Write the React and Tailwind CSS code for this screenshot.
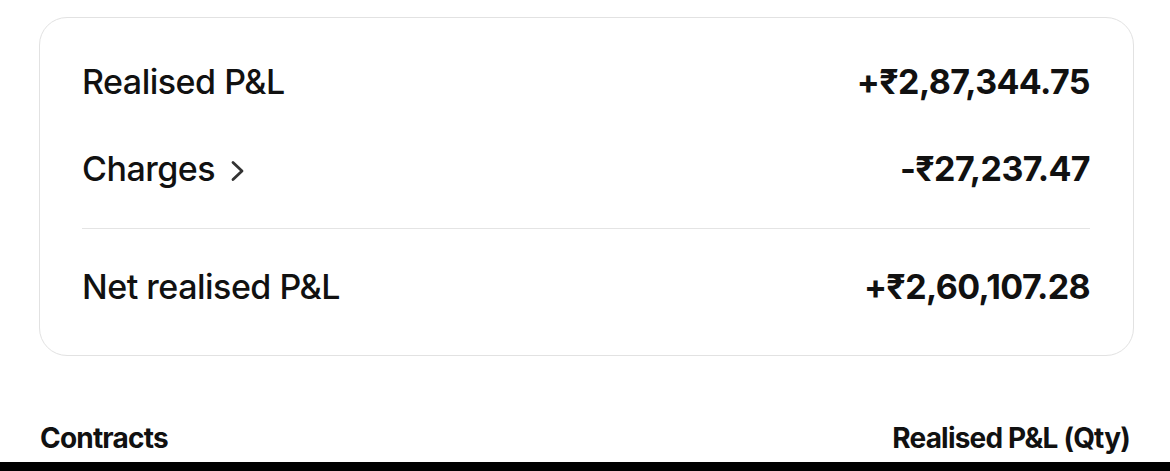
import React from 'react';

const rows = [
  { label: 'Realised P&L', value: '+₹2,87,344.75' },
  { label: 'Charges', value: '-₹27,237.47', link: true },
];

function Chevron() {
  return (
    <svg width="16" height="24" viewBox="0 0 16 24" fill="none" className="ml-[14px] mt-[4px]">
      <path d="M4 3.5l9 8.5-9 8.5" stroke="#333" strokeWidth="2.8" strokeLinecap="round" strokeLinejoin="round" />
    </svg>
  );
}

export default function App() {
  return (
    <div className="w-[1170px] h-[471px] bg-white overflow-hidden flex flex-col text-[#111]" style={{ fontFamily: 'Inter, "Noto Sans", sans-serif' }}>
      <div className="pl-[39px] pr-[36px] pt-[17px]">
        <div className="border border-[#e2e2e2] rounded-[28px] pt-[44px] pb-[48px] pl-[42px] pr-[43px]">
          <div className="flex flex-col gap-[47px]">
            {rows.map((r) => (
              <div key={r.label} className="flex items-center justify-between h-[40px]">
                <div className="flex items-center text-[34px] leading-[40px] font-medium tracking-[-0.5px]">
                  {r.label}
                  {r.link && <Chevron />}
                </div>
                <div className="text-[34px] leading-[40px] font-bold tracking-[-0.6px]">{r.value}</div>
              </div>
            ))}
          </div>
          <div className="h-px bg-[#e4e4e4] mt-[39px] mb-[38px]" />
          <div className="flex items-center justify-between h-[40px]">
            <div className="text-[34px] leading-[40px] font-medium tracking-[-0.5px]">Net realised P&L</div>
            <div className="text-[34px] leading-[40px] font-bold tracking-[-0.6px]">+₹2,60,107.28</div>
          </div>
        </div>
      </div>
      <div className="flex-1 flex items-end justify-between pl-[40px] pr-[40px] pb-[6px]">
        <div className="text-[28px] leading-[36px] font-bold tracking-[-0.8px]">Contracts</div>
        <div className="text-[28px] leading-[36px] font-bold tracking-[-0.8px]">Realised P&L (Qty)</div>
      </div>
      <div className="h-[9px] bg-black" />
    </div>
  );
}
